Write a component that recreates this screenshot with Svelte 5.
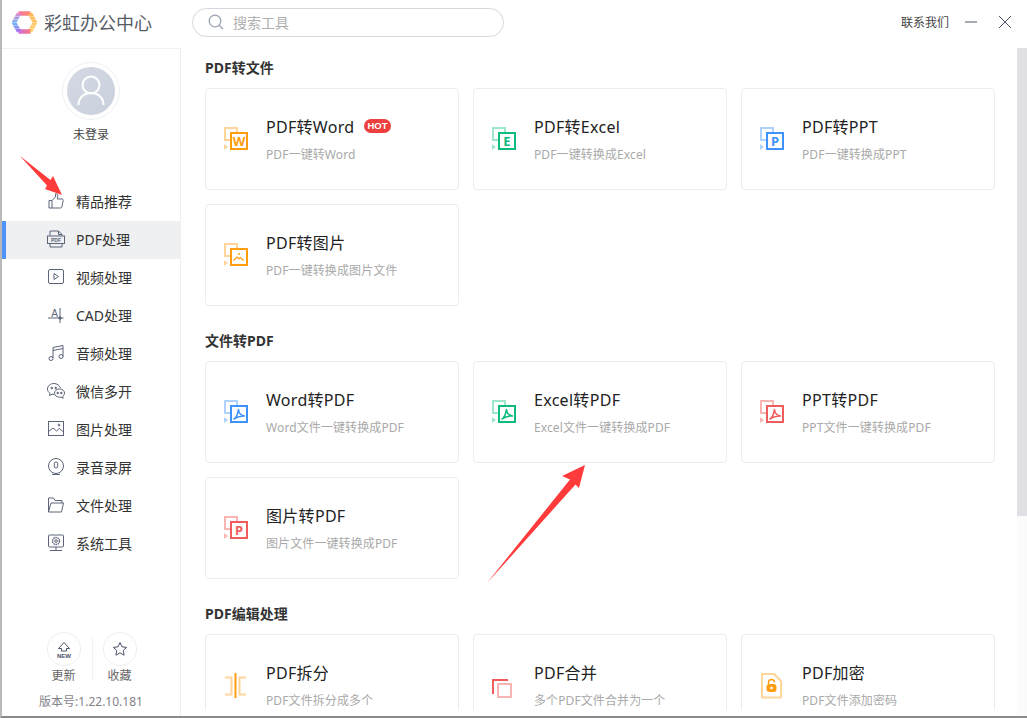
<script>
  const nav = [
    { id: "thumb", label: "精品推荐" },
    { id: "pdf", label: "PDF处理", active: true },
    { id: "video", label: "视频处理" },
    { id: "cad", label: "CAD处理" },
    { id: "music", label: "音频处理" },
    { id: "wechat", label: "微信多开" },
    { id: "image", label: "图片处理" },
    { id: "record", label: "录音录屏" },
    { id: "folder", label: "文件处理" },
    { id: "system", label: "系统工具" }
  ];

  const orange = ["#ff9d0e", "#ffd59a"];
  const green = ["#0dbb7d", "#9fe6cb"];
  const blue = ["#3d93fb", "#aed2fd"];
  const red = ["#f05c5c", "#f9b4b4"];

  const sections = [
    {
      title: "PDF转文件",
      cards: [
        { name: "PDF转Word", desc: "PDF一键转Word", color: orange, glyph: "W", hot: true },
        { name: "PDF转Excel", desc: "PDF一键转换成Excel", color: green, glyph: "E" },
        { name: "PDF转PPT", desc: "PDF一键转换成PPT", color: blue, glyph: "P" },
        { name: "PDF转图片", desc: "PDF一键转换成图片文件", color: orange, glyph: "img" }
      ]
    },
    {
      title: "文件转PDF",
      cards: [
        { name: "Word转PDF", desc: "Word文件一键转换成PDF", color: blue, glyph: "acrobat" },
        { name: "Excel转PDF", desc: "Excel文件一键转换成PDF", color: green, glyph: "acrobat" },
        { name: "PPT转PDF", desc: "PPT文件一键转换成PDF", color: red, glyph: "acrobat" },
        { name: "图片转PDF", desc: "图片文件一键转换成PDF", color: red, glyph: "P" }
      ]
    },
    {
      title: "PDF编辑处理",
      cards: [
        { name: "PDF拆分", desc: "PDF文件拆分成多个", color: orange, glyph: "split" },
        { name: "PDF合并", desc: "多个PDF文件合并为一个", color: red, glyph: "merge" },
        { name: "PDF加密", desc: "PDF文件添加密码", color: orange, glyph: "lock" }
      ]
    }
  ];
</script>

{#snippet navIcon(id)}
  <svg class="nav-icon" viewBox="0 0 18 18" fill="none" stroke="#5b6478" stroke-width="1">
    {#if id === "thumb"}
      <path d="M2 8.500h3v7.500H2zM5 8.500l3.500-3.600V1.800c1.600-.3 2.500.8 2.300 2.400l-.4 2.800h4.600c.9 0 1.400.7 1.200 1.500l-1.400 6.400c-.2.7-.6 1.100-1.300 1.100H5"/>
    {:else if id === "pdf"}
      <path d="M3 5.500V1h8.500L15 4.500v1M11.500 1v3.500H15M3 13.500V17h12v-3.500"/>
      <rect x="0.500" y="6" width="17" height="7.500"/>
      <text x="9" y="12" class="mini" text-anchor="middle">PDF</text>
    {:else if id === "video"}
      <rect x="1.500" y="1.500" width="15" height="14" rx="1.500"/>
      <path d="M7 5.500l4.500 3-4.500 3z"/>
    {:else if id === "cad"}
      <text x="7.500" y="10.500" class="cad" text-anchor="middle">A</text>
      <path d="M1 12h15.500M13 2v15"/>
      <circle cx="13" cy="12" r="1.200" fill="#5b6478"/>
    {:else if id === "music"}
      <path d="M6 14V3.500L16 1.500V12.500M6 6.500l10-2"/>
      <circle cx="4" cy="14.500" r="2"/>
      <circle cx="14" cy="12.500" r="2"/>
    {:else if id === "wechat"}
      <path d="M7 1.500C3.400 1.500.5 3.900.5 7c0 1.800 1 3.300 2.500 4.300L2.500 13.500l2.600-1.300c.6.2 1.200.3 1.900.3M13.500 6C12.600 3.400 10 1.500 7 1.500"/>
      <path d="M12.500 7c-2.800 0-5 1.800-5 4.100s2.200 4.100 5 4.100c.5 0 1-.1 1.500-.2l2.200 1.300-.5-2c1-.8 1.800-1.900 1.800-3.200 0-2.300-2.200-4.100-5-4.100z"/>
      <circle cx="4.800" cy="6" r=".8" fill="#5b6478"/>
      <circle cx="8.700" cy="6" r=".8" fill="#5b6478"/>
      <circle cx="10.700" cy="11" r=".8" fill="#5b6478"/>
      <circle cx="14.300" cy="11" r=".8" fill="#5b6478"/>
    {:else if id === "image"}
      <rect x="1.500" y="1.500" width="15" height="14"/>
      <path d="M1.500 11.500L6 8l3.500 3 3-2.500 4 3.500"/>
      <circle cx="12" cy="5" r=".9"/>
    {:else if id === "record"}
      <circle cx="9" cy="8" r="7.500"/>
      <rect x="7.300" y="4" width="3.400" height="6" rx="1.700"/>
      <path d="M5 16.500h8"/>
    {:else if id === "folder"}
      <path d="M1.500 16V2h5l1.500 2.500h7v2.500M1.500 16h13l2-9H4z"/>
    {:else if id === "system"}
      <rect x="1.500" y="1" width="15" height="12" rx="1"/>
      <circle cx="9" cy="7" r="3.500" stroke-dasharray="1.500 .7" stroke-width="1.400"/>
      <circle cx="9" cy="7" r="1.300"/>
      <path d="M9 13v3M3 16.500h12"/>
    {/if}
  </svg>
{/snippet}

{#snippet toolIcon(card)}
  {@const dark = card.color[0]}
  {@const light = card.color[1]}
  <svg class="tool-icon" viewBox="0 0 24 26" fill="none">
    {#if card.glyph === "split"}
      <path d="M11.500 0v25" stroke={dark} stroke-width="2"/>
      <path d="M1 4.500h6.500v17H1M22 4.500h-6.500v17H22" stroke={light} stroke-width="2"/>
    {:else if card.glyph === "merge"}
      <path d="M1 21V7h15" stroke={dark} stroke-width="2"/>
      <rect x="6" y="11" width="13" height="13" stroke={light} stroke-width="2"/>
    {:else if card.glyph === "lock"}
      <path d="M2 1h12l7 7v16.500H2z" stroke={light} stroke-width="2" stroke-linejoin="round"/>
      <rect x="6.500" y="11" width="10" height="8" rx="3" fill={dark}/>
      <path d="M8.500 11V9.500a3 3 0 0 1 6 0" stroke={dark} stroke-width="1.400"/>
      <circle cx="11.500" cy="15" r="1.300" fill="#fff"/>
    {:else}
      <rect x="1" y="1" width="12" height="12" stroke={light} stroke-width="2"/>
      <path d="M0 17l4 3-4 3z" fill={light}/>
      <rect x="7" y="6" width="16" height="16" fill="#fff" stroke={dark} stroke-width="2"/>
      {#if card.glyph === "img"}
        <path d="M9.500 17.500l3.500-3.500 2 1.800 1.500-1.300 3 3" stroke={dark} stroke-width="1.200"/>
        <circle cx="15" cy="11" r="1" fill={dark}/>
      {:else if card.glyph === "acrobat"}
        <path d="M10 19c2-1 3.500-4 4.500-9.500.3 3 2 6 6 6.500-3-.3-6.500 .3-10.500 3z" stroke={dark} stroke-width="1.500" stroke-linejoin="round"/>
      {:else}
        <text x="15" y="18.800" class="glyph" fill={dark} text-anchor="middle">{card.glyph}</text>
      {/if}
    {/if}
  </svg>
{/snippet}

<div class="window">
  <header class="topbar">
    <div class="brand">
      <svg class="logo" viewBox="0 0 25 23" fill="none" stroke-width="4.500">
        <defs>
          <linearGradient id="lg-top" gradientUnits="userSpaceOnUse" x1="5" y1="0" x2="20" y2="0"><stop offset="0" stop-color="#f472b0"/><stop offset="1" stop-color="#ff8f5e"/></linearGradient>
          <linearGradient id="lg-right" gradientUnits="userSpaceOnUse" x1="0" y1="2" x2="0" y2="21"><stop offset="0" stop-color="#ffb45c"/><stop offset="1" stop-color="#ffd36a"/></linearGradient>
          <linearGradient id="lg-bottom" gradientUnits="userSpaceOnUse" x1="5" y1="0" x2="20" y2="0"><stop offset="0" stop-color="#c76cf0"/><stop offset="1" stop-color="#ff7a6a"/></linearGradient>
          <linearGradient id="lg-left" gradientUnits="userSpaceOnUse" x1="2" y1="2" x2="7" y2="21"><stop offset="0" stop-color="#f283c4"/><stop offset=".5" stop-color="#6fb6f5"/><stop offset="1" stop-color="#a86bf2"/></linearGradient>
        </defs>
        <path d="M6.500 2.500h12" stroke="url(#lg-top)"/>
        <path d="M18 2.500l5 9-5 9" stroke="url(#lg-right)"/>
        <path d="M18.500 20.500h-12" stroke="url(#lg-bottom)"/>
        <path d="M7 20.500l-5-9 5-9" stroke="url(#lg-left)"/>
        <path d="M0 5.500h25M0 8.500h25M0 11.500h25M0 14.500h25M0 17.500h25" stroke="#fff" stroke-width=".6" opacity=".6"/>
      </svg>
      <span>彩虹办公中心</span>
    </div>
    <div class="search">
      <svg viewBox="0 0 16 16" fill="none" stroke="#9aa2b5" stroke-width="1.300"><circle cx="7" cy="7" r="5.800"/><path d="M11.200 11.200L15 15"/></svg>
      <span>搜索工具</span>
    </div>
    <div class="actions">
      <span>联系我们</span>
      <svg viewBox="0 0 12 12" stroke="#4a5268"><path d="M0 6h12"/></svg>
      <svg viewBox="0 0 12 12" stroke="#4a5268"><path d="M0 0l12 12M12 0L0 12"/></svg>
    </div>
  </header>

  <div class="body">
    <aside class="sidebar">
      <div class="user">
        <div class="avatar-ring">
          <div class="avatar">
            <svg viewBox="0 0 48 48" fill="none" stroke="#fff" stroke-width="2"><circle cx="24" cy="18" r="8.500"/><path d="M11.500 38c0-7.500 5.500-12 12.500-12s12.500 4.500 12.500 12"/></svg>
          </div>
        </div>
        <span>未登录</span>
      </div>

      <nav>
        {#each nav as item}
          <div class="nav-row" class:active={item.active}>
            {@render navIcon(item.id)}
            <span>{item.label}</span>
          </div>
        {/each}
      </nav>

      <div class="foot">
        <div class="foot-btns">
          <div class="foot-btn">
            <div class="circle">
              <svg viewBox="0 0 20 20" fill="none" stroke="#4a5268"><path d="M4.500 9.500L10 3.500l5.500 6h-3v2.500h-5V9.500z"/><text x="10" y="18.500" class="new" text-anchor="middle">NEW</text></svg>
            </div>
            <span>更新</span>
          </div>
          <div class="foot-btn">
            <div class="circle">
              <svg viewBox="0 0 20 20" fill="none" stroke="#4a5268"><path d="M10 3.500l2 4.300 4.600.6-3.400 3.200.9 4.600L10 13.900l-4.100 2.300.9-4.600-3.400-3.200 4.600-.6z"/></svg>
            </div>
            <span>收藏</span>
          </div>
        </div>
        <div class="version">版本号:1.22.10.181</div>
      </div>
    </aside>

    <main class="content">
      {#each sections as section}
        <section>
          <h2>{section.title}</h2>
          <div class="grid">
            {#each section.cards as card}
              <div class="card">
                {@render toolIcon(card)}
                <div class="card-text">
                  <div class="card-name">
                    {card.name}
                    {#if card.hot}<em>HOT</em>{/if}
                  </div>
                  <div class="card-desc">{card.desc}</div>
                </div>
              </div>
            {/each}
          </div>
        </section>
      {/each}
    </main>

    <div class="scrollbar"><div class="thumb"></div></div>
  </div>

  <!-- annotation arrows drawn over the screenshot -->
  <svg class="arrows" viewBox="0 0 1027 718" fill="#ff3b3b">
    <path d="M20 156L50.500 180 53 176 62 195 45 189 47 185.500z"/>
    <path d="M487 583L570 479.500 562 476 585 465 579 488 575.500 484.500z"/>
  </svg>
</div>

<style>
  :global(body) {
    margin: 0;
    background: #fff;
  }

  .window {
    position: relative;
    box-sizing: border-box;
    width: 1027px;
    height: 718px;
    display: flex;
    flex-direction: column;
    overflow: hidden;
    background: #fff;
    border-left: 2px solid #b9b9b9;
    border-bottom: 2px solid #8a8a8a;
    font-family: "Noto Sans", "Noto Sans CJK SC", sans-serif;
    color: #333;
  }

  .topbar {
    flex: none;
    box-sizing: border-box;
    height: 48px;
    padding-bottom: 4px;
    display: flex;
    align-items: center;
  }

  .brand {
    width: 190px;
    display: flex;
    align-items: center;
    gap: 7px;
    padding-left: 10px;
    box-sizing: border-box;
    font-size: 18px;
    color: #565b66;
  }

  .logo {
    width: 25px;
    height: 23px;
  }

  .search {
    box-sizing: border-box;
    width: 312px;
    height: 29px;
    display: flex;
    align-items: center;
    gap: 9px;
    padding-left: 15px;
    border: 1px solid #d6d7de;
    border-radius: 15px;
    font-size: 14px;
    color: #b0b0b0;
  }

  .search svg {
    width: 16px;
    height: 16px;
  }

  .actions {
    margin-left: auto;
    padding-right: 16px;
    display: flex;
    align-items: center;
    gap: 16px;
    font-size: 12px;
    color: #444;
  }

  .actions svg {
    width: 12px;
    height: 12px;
  }

  .actions svg:last-child {
    margin-left: 6px;
  }

  .body {
    flex: 1;
    min-height: 0;
    display: flex;
  }

  .sidebar {
    flex: none;
    box-sizing: border-box;
    width: 179px;
    display: flex;
    flex-direction: column;
    border-top: 1px solid #f0f1f3;
    border-right: 1px solid #eeeff1;
  }

  .user {
    height: 134px;
    display: flex;
    flex-direction: column;
    align-items: center;
    padding-top: 13px;
    box-sizing: border-box;
    font-size: 12px;
    color: #444;
    gap: 5px;
  }

  .avatar-ring {
    box-sizing: border-box;
    width: 58px;
    height: 58px;
    padding: 4px;
    border: 1px solid #eef1f5;
    border-radius: 50%;
  }

  .avatar {
    width: 48px;
    height: 48px;
    border-radius: 50%;
    background: linear-gradient(135deg, #d4d9e4, #c9cfdc);
  }

  .avatar svg {
    display: block;
  }

  .nav-row {
    position: relative;
    box-sizing: border-box;
    height: 38px;
    padding-bottom: 2px;
    display: flex;
    align-items: center;
    gap: 11px;
    padding-left: 45px;
    font-size: 14px;
    color: #333;
  }

  .nav-row.active {
    background: #eff0f2;
  }

  .nav-row.active::before {
    content: "";
    position: absolute;
    left: 0;
    top: 0;
    bottom: 0;
    width: 4px;
    background: #4f93f8;
  }

  .nav-icon {
    width: 18px;
    height: 18px;
    flex: none;
  }

  .mini {
    font: 700 5px "Liberation Sans", sans-serif;
    fill: #5b6478;
    stroke: none;
  }

  .cad {
    font: 10px "Liberation Sans", sans-serif;
    fill: #5b6478;
    stroke: none;
  }

  .foot {
    margin-top: auto;
    padding-bottom: 6px;
  }

  .foot-btns {
    display: flex;
    justify-content: center;
    gap: 22px;
    padding-left: 1px;
  }

  .foot-btn {
    display: flex;
    flex-direction: column;
    align-items: center;
    font-size: 12px;
    color: #666;
  }

  .foot-btn + .foot-btn {
    position: relative;
  }

  .foot-btn + .foot-btn::before {
    content: "";
    position: absolute;
    left: -11px;
    top: 6px;
    bottom: 4px;
    width: 1px;
    background: #f0f1f3;
  }

  .circle {
    box-sizing: border-box;
    width: 34px;
    height: 34px;
    display: flex;
    align-items: center;
    justify-content: center;
    border: 1px solid #eeeff1;
    border-radius: 50%;
  }

  .circle svg {
    width: 20px;
    height: 20px;
  }

  .new {
    font: 700 6px "Liberation Sans", sans-serif;
    fill: #4a5268;
    stroke: none;
  }

  .version {
    margin-top: 8px;
    text-align: center;
    font-size: 12px;
    color: #7f8388;
  }

  .content {
    flex: 1;
    min-width: 0;
    height: 662px;
    overflow: hidden;
    padding-left: 24px;
  }

  section + section {
    margin-top: 15px;
  }

  h2 {
    margin: 0;
    height: 40px;
    line-height: 40px;
    font-size: 14px;
    font-weight: 700;
    color: #333;
  }

  .grid {
    display: grid;
    grid-template-columns: repeat(3, 254px);
    grid-auto-rows: 102px;
    gap: 14px;
  }

  .card {
    box-sizing: border-box;
    display: flex;
    align-items: center;
    gap: 18px;
    padding-left: 18px;
    border: 1px solid #ececee;
    border-radius: 4px;
  }

  .tool-icon {
    width: 24px;
    height: 26px;
    flex: none;
    margin-top: 2px;
  }

  .glyph {
    font: 700 13px "Noto Sans", sans-serif;
  }

  .card-text {
    display: flex;
    flex-direction: column;
    gap: 7px;
    margin-bottom: 2px;
  }

  .card-name {
    display: flex;
    align-items: center;
    gap: 10px;
    height: 24px;
    font-size: 16px;
    color: #222;
    letter-spacing: .3px;
  }

  .card-name em {
    height: 14px;
    padding: 0 3px;
    line-height: 14px;
    border-radius: 7px;
    background: #ee3f3f;
    color: #fff;
    font-size: 9.5px;
    font-style: normal;
    font-weight: 700;
    letter-spacing: 0;
    font-family: "Liberation Sans", sans-serif;
  }

  .card-desc {
    font-size: 12px;
    color: #a9a9a9;
    letter-spacing: .1px;
  }

  .scrollbar {
    flex: none;
    width: 10px;
    background: #fbfbfb;
  }

  .thumb {
    height: 468px;
    background: #e0e0e4;
  }

  .arrows {
    position: absolute;
    left: -2px;
    top: 0;
    width: 1027px;
    height: 718px;
    pointer-events: none;
  }
</style>
